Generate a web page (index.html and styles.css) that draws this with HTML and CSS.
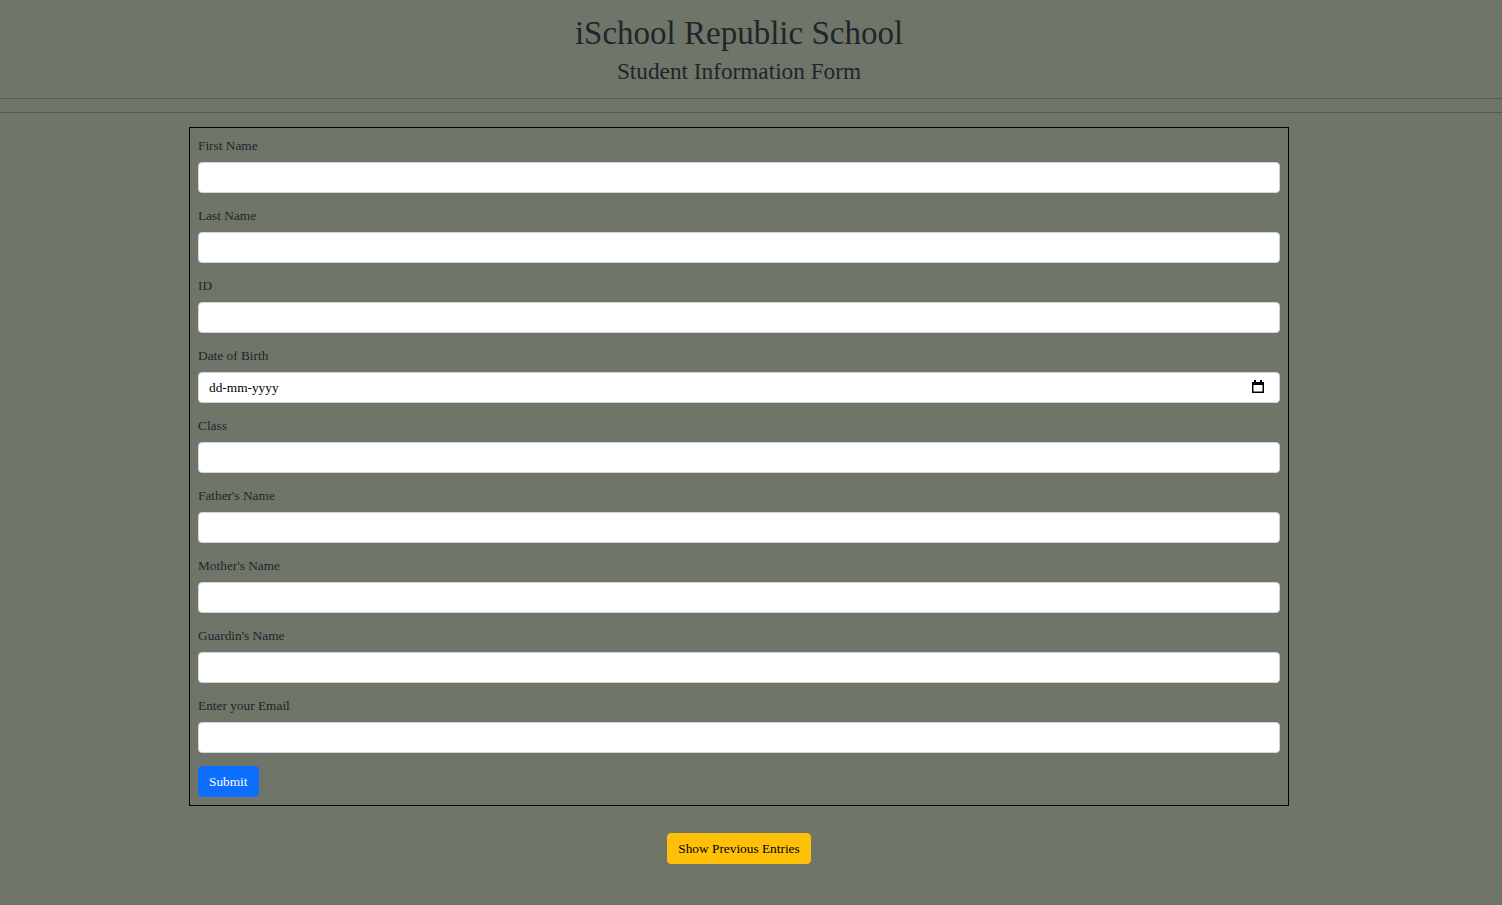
FILE: index.html
```html
<!DOCTYPE html>
<html lang="en">
<head>
<meta charset="utf-8">
<title>iSchool Republic School</title>
<link rel="stylesheet" href="styles.css">
</head>
<body>
  <header class="site-header">
    <div class="center-wrap">
      <h1 class="title">iSchool Republic School</h1>
      <h4 class="subtitle">Student Information Form</h4>
    </div>
  </header>
  <hr class="rule rule-first">
  <hr class="rule rule-second">
  <main class="center-wrap">
    <form class="student-form">
      <div class="field">
        <label class="field-label" for="fname">First Name</label>
        <input class="field-input" type="text" id="fname">
      </div>
      <div class="field">
        <label class="field-label" for="lname">Last Name</label>
        <input class="field-input" type="text" id="lname">
      </div>
      <div class="field">
        <label class="field-label" for="sid">ID</label>
        <input class="field-input" type="text" id="sid">
      </div>
      <div class="field">
        <label class="field-label" for="dob">Date of Birth</label>
        <div class="date-box">
          <input class="field-input date-input" type="text" id="dob" placeholder="dd-mm-yyyy">
          <svg class="cal-icon" width="12" height="13" viewBox="0 0 12 13" aria-hidden="true">
            <rect x="0" y="2" width="12" height="11" fill="#000"/>
            <rect x="1.5" y="5" width="9" height="6.5" fill="#fff"/>
            <rect x="2" y="0" width="2" height="3" fill="#000"/>
            <rect x="8" y="0" width="2" height="3" fill="#000"/>
          </svg>
        </div>
      </div>
      <div class="field">
        <label class="field-label" for="cls">Class</label>
        <input class="field-input" type="text" id="cls">
      </div>
      <div class="field">
        <label class="field-label" for="father">Father's Name</label>
        <input class="field-input" type="text" id="father">
      </div>
      <div class="field">
        <label class="field-label" for="mother">Mother's Name</label>
        <input class="field-input" type="text" id="mother">
      </div>
      <div class="field">
        <label class="field-label" for="guardian">Guardin's Name</label>
        <input class="field-input" type="text" id="guardian">
      </div>
      <div class="field">
        <label class="field-label" for="email">Enter your Email</label>
        <input class="field-input" type="email" id="email">
      </div>
      <button class="btn btn-primary" type="button">Submit</button>
    </form>
    <div class="entries-row">
      <button class="btn btn-warning" type="button">Show Previous Entries</button>
    </div>
  </main>
</body>
</html>
```

FILE: styles.css
```css
* { box-sizing: border-box; }

html, body {
  margin: 0;
  padding: 0;
}

body {
  background: #6f7569;
  color: #212529;
  font-family: "Liberation Serif", "Times New Roman", serif;
  min-height: 905px;
}

.center-wrap {
  width: 1478px;
  display: flex;
  flex-direction: column;
  align-items: center;
}

.site-header .center-wrap {
  padding-top: 13px;
}

.title {
  margin: 0;
  font-size: 33px;
  font-weight: 400;
  line-height: 40px;
}

.subtitle {
  margin: 4px 0 0;
  font-size: 23.25px;
  font-weight: 400;
  line-height: 28px;
}

.rule {
  border: 0;
  border-top: 1px solid #565b52;
  margin: 0;
  height: 0;
}

.rule-first { margin-top: 13px; }
.rule-second { margin-top: 13px; }

.student-form {
  margin-top: 14px;
  width: 1100px;
  border: 1px solid #000;
  padding: 8px;
  display: flex;
  flex-direction: column;
}

.field {
  display: flex;
  flex-direction: column;
  margin-bottom: 13px;
}

.field-label {
  font-size: 13.33px;
  line-height: 20px;
  margin-bottom: 6px;
}

.field-input {
  height: 31px;
  width: 100%;
  border: 1px solid #ced4da;
  border-radius: 4px;
  background: #fff;
  padding: 0 8px;
  font-family: "Liberation Serif", "Times New Roman", serif;
  font-size: 13.33px;
  color: #212529;
}

.date-box {
  position: relative;
  display: flex;
}

.date-input {
  padding-left: 10px;
}

.date-input::placeholder {
  color: #000;
  opacity: 1;
}

.cal-icon {
  position: absolute;
  right: 16px;
  top: 8px;
}

.btn {
  height: 31px;
  border-radius: 4px;
  padding: 0 10px;
  font-family: "Liberation Serif", "Times New Roman", serif;
  font-size: 13.33px;
  cursor: pointer;
}

.btn-primary {
  align-self: flex-start;
  background: #0d6efd;
  border: 1px solid #0d6efd;
  color: #fff;
}

.btn-warning {
  background: #ffc107;
  border: 1px solid #ffc107;
  color: #000;
}

.entries-row {
  margin-top: 27px;
  display: flex;
  justify-content: center;
}
```
